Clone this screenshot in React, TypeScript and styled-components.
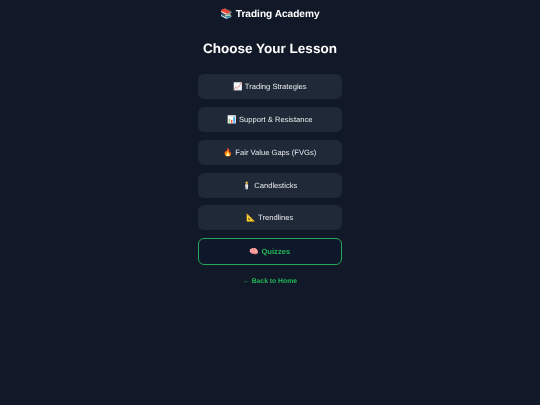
import React from "react";
import styled, { createGlobalStyle } from "styled-components";

const Global = createGlobalStyle`
  html, body { margin: 0; padding: 0; background: #111827; }
  body {
    font-family: "Liberation Sans", Arial, sans-serif;
    color: #fff;
    text-rendering: geometricPrecision;
  }
`;
const Page = styled.div`
  min-height: 405px;
  display: flex;
  flex-direction: column;
  align-items: center;
  will-change: transform;
`;
const Header = styled.header`
  height: 29px;
  padding-top: 8px;
  box-sizing: border-box;
  font-size: 10.1px;
  line-height: 13px;
  font-weight: 700;
`;
const Title = styled.h1`
  margin: 11px 0 17px;
  font-size: 13.5px;
  line-height: 17px;
  font-weight: 700;
`;
const List = styled.nav`
  display: flex;
  flex-direction: column;
  gap: 7.85px;
  width: 144px;
`;
const Lesson = styled.a<{ $active?: boolean }>`
  height: ${p => (p.$active ? "26.5px" : "25px")};
  box-sizing: border-box;
  border-radius: 6px;
  display: flex;
  align-items: center;
  justify-content: center;
  font-size: 7.6px;
  background: ${p => (p.$active ? "#0f172a" : "#1f2937")};
  border: ${p => (p.$active ? "1.5px solid #24a95b" : "none")};
  color: ${p => (p.$active ? "#22b858" : "#e8eaee")};
  font-weight: ${p => (p.$active ? 700 : 400)};
`;
const Back = styled.a`
  margin-top: 12px;
  font-size: 6.8px;
  line-height: 9px;
  font-weight: 700;
  color: #22b858;
`;
const lessons = [
  "📈 Trading Strategies",
  "📊 Support & Resistance",
  "🔥 Fair Value Gaps (FVGs)",
  "🕯️ Candlesticks",
  "📐 Trendlines",
];
export default function App() {
  return (
    <Page>
      <Global />
      <Header>📚 Trading Academy</Header>
      <Title>Choose Your Lesson</Title>
      <List>
        {lessons.map(l => (
          <Lesson key={l}>{l}</Lesson>
        ))}
        <Lesson $active>🧠 Quizzes</Lesson>
      </List>
      <Back>← Back to Home</Back>
    </Page>
  );
}
